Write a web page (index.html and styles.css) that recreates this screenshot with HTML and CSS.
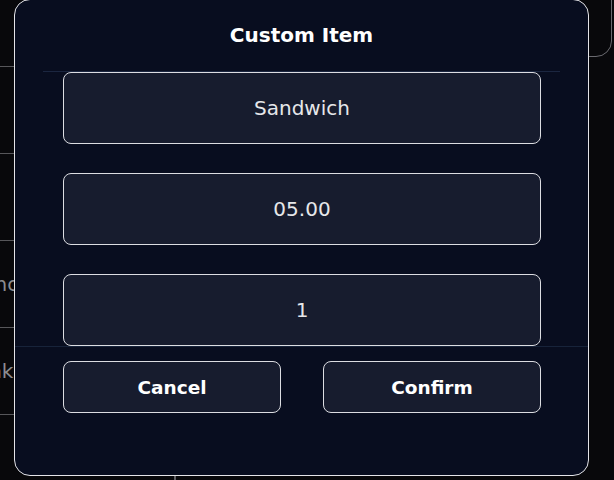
FILE: index.html
```html
<!DOCTYPE html>
<html lang="en">
<head>
<meta charset="utf-8">
<title>Custom Item</title>
<link rel="stylesheet" href="styles.css">
</head>
<body>
<div class="app">
  <aside class="sidebar">
    <div class="cat"></div>
    <div class="cat"></div>
    <div class="cat"></div>
    <div class="cat">Brunch</div>
    <div class="cat">Drinks</div>
    <div class="cat"></div>
  </aside>
  <main class="main">
    <div class="topbox"></div>
  </main>
</div>

<div class="modal">
  <header class="modal-head">
    <h2 class="modal-title">Custom Item</h2>
  </header>
  <div class="modal-body">
    <div class="field">Sandwich</div>
    <div class="field">05.00</div>
    <div class="field">1</div>
  </div>
  <footer class="modal-foot">
    <button class="btn">Cancel</button>
    <button class="btn">Confirm</button>
  </footer>
</div>
</body>
</html>
```

FILE: styles.css
```css
* { box-sizing: border-box; }

body {
  margin: 0;
  width: 614px;
  height: 480px;
  overflow: hidden;
  position: relative;
  background: #08080b;
  font-family: "DejaVu Sans", "Noto Sans", sans-serif;
}

.app {
  display: flex;
  height: 480px;
}

.sidebar {
  width: 216px;
  margin-left: -40px;
  margin-top: -20px;
  border-right: 2px solid #5e5e62;
  flex-shrink: 0;
}

.cat {
  height: 87px;
  border-bottom: 1px solid #56565a;
  display: flex;
  align-items: center;
  font-size: 20px;
  color: #8c8c90;
}

.main {
  flex: 1;
  padding-right: 2px;
}

.topbox {
  margin-top: -20px;
  height: 77px;
  border: 1px solid #6a6a70;
  border-radius: 16px;
}

.modal {
  position: absolute;
  left: 14px;
  top: -1px;
  width: 575px;
  height: 477px;
  border: 1px solid #e4e4e8;
  border-radius: 16px;
  background: #080d1f;
  display: flex;
  flex-direction: column;
  color: #fff;
}

.modal-head {
  margin: 0 28px;
  height: 72px;
  border-bottom: 1px solid #1b2640;
  display: flex;
  align-items: center;
  justify-content: center;
}

.modal-title {
  margin: 0 0 2px;
  font-size: 20px;
  font-weight: 700;
  color: #ffffff;
}

.modal-body {
  height: 274px;
  padding: 0 47px 0 48px;
  display: flex;
  flex-direction: column;
  gap: 29px;
  overflow: hidden;
}

.field {
  height: 72px;
  flex-shrink: 0;
  border: 1px solid #dcdde2;
  border-radius: 8px;
  background: #171c2e;
  display: flex;
  align-items: center;
  justify-content: center;
  font-size: 20px;
  color: #e6e7ea;
}

.modal-foot {
  border-top: 1px solid #17233a;
  padding: 14px 47px 0 48px;
  display: flex;
  justify-content: space-between;
}

.btn {
  width: 218px;
  height: 52px;
  border: 1px solid #dcdde2;
  border-radius: 8px;
  background: #171c2e;
  color: #ffffff;
  font-family: inherit;
  font-size: 18.5px;
  font-weight: 700;
  padding: 0;
}
```
